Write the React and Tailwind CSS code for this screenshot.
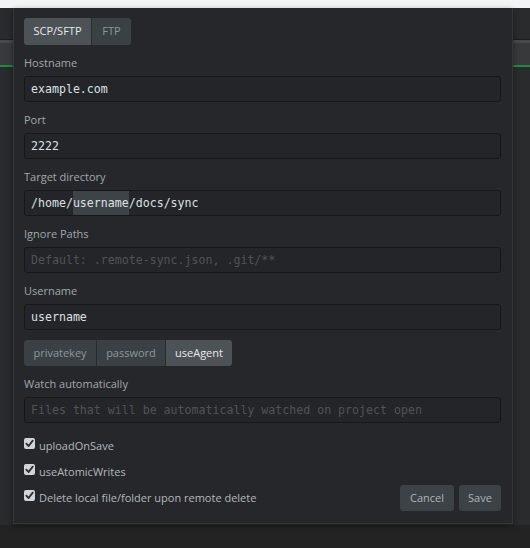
import React from 'react';

const ui = { fontFamily: '"Open Sans", "DejaVu Sans", sans-serif' };
const mono = { fontFamily: '"DejaVu Sans Mono", "Liberation Mono", monospace' };

const Field = ({ label, value, placeholder, children }) => (
  <div className="flex flex-col">
    <label className="h-4 leading-4 text-[11px] text-[#a2a7ac]">{label}</label>
    <div
      className="mt-[5px] h-[26px] rounded-[3px] border border-[#16171a] bg-[#232528] px-[6px] pt-[2px] flex items-center text-[11.6px]"
      style={mono}
    >
      {children ? children : value ? (
        <span className="text-[#dde1e6]">{value}</span>
      ) : (
        <span className="text-[#4f5357]">{placeholder}</span>
      )}
    </div>
  </div>
);

const Check = ({ label }) => (
  <div className="flex items-center h-[26px] gap-[4px]">
    <span className="w-[11px] h-[11px] -mt-[5px] rounded-[2px] bg-[#d2d4d6] flex items-center justify-center">
      <svg width="9" height="9" viewBox="0 0 10 10">
        <path d="M1.5 5.2 L4 7.8 L8.6 1.8" fill="none" stroke="#2a2c2f" strokeWidth="2" strokeLinecap="round" strokeLinejoin="round" />
      </svg>
    </span>
    <span className="text-[11px] text-[#b4b8bd]">{label}</span>
  </div>
);

const Segmented = ({ items, active, widths, tall }) => (
  <div className={`flex ${tall ? 'h-[27px]' : 'h-[26px]'} rounded-[3px] overflow-hidden w-fit`}>
    {items.map((it, i) => (
      <div
        key={it}
        className={`flex items-center justify-center text-[11px] ${i > 0 ? 'border-l border-[#2a2d30]' : ''} ${
          it === active ? 'bg-[#4c5256] text-[#e8eaec]' : 'bg-[#3b4044] text-[#8f969c]'
        }`}
        style={{ width: widths[i] }}
      >
        {it}
      </div>
    ))}
  </div>
);

export default function App() {
  return (
    <div className="relative w-[530px] h-[548px] bg-[#232324] overflow-hidden" style={ui}>
      {/* page behind the modal */}
      <div className="h-[8px] bg-[#f3f4f6]" />
      <div className="h-[31px] bg-[#2a2b2d]" />
      <div className="h-[1px] bg-[#1c1d1e]" />
      <div className="h-[3px] bg-[#48494b]" />
      <div className="h-[22px] bg-[#38393a]" />
      <div className="h-[2px] bg-[#1f8a3b]" />
      <div className="h-[458px] bg-[#2a2b2d]" />

      {/* modal */}
      <div className="absolute left-[13px] top-[8px] w-[500px] h-[516px] bg-[#25272a] border border-[#34363a] border-t-0 shadow-[0_2px_6px_rgba(0,0,0,0.4)] pl-[10px] pr-[11px] pt-[10px] flex flex-col">
        <Segmented items={['SCP/SFTP', 'FTP']} active="SCP/SFTP" widths={[67, 40]} tall />

        <div className="mt-[10px] flex flex-col gap-[10px]">
          <Field label="Hostname" value="example.com" />
          <Field label="Port" value="2222" />
          <Field label="Target directory">
            <span className="text-[#dde1e6]">
              /home/<span className="bg-[#3e4348] py-[5px]">username</span>/docs/sync
            </span>
          </Field>
          <Field label="Ignore Paths" placeholder="Default: .remote-sync.json, .git/**" />
          <Field label="Username" value="username" />
          <Segmented items={['privatekey', 'password', 'useAgent']} active="useAgent" widths={[72, 69, 67]} />
          <Field label="Watch automatically" placeholder="Files that will be automatically watched on project open" />
        </div>

        <div className="mt-[10px] flex flex-col">
          <Check label="uploadOnSave" />
          <Check label="useAtomicWrites" />
          <div className="flex items-center justify-between">
            <Check label="Delete local file/folder upon remote delete" />
            <div className="flex gap-[5px]">
              <button className="h-[26px] w-[54px] rounded-[3px] bg-[#3d4246] text-[11px] text-[#adb3b9]">Cancel</button>
              <button className="h-[26px] w-[42px] rounded-[3px] bg-[#3d4246] text-[11px] text-[#adb3b9]">Save</button>
            </div>
          </div>
        </div>
      </div>
    </div>
  );
}
